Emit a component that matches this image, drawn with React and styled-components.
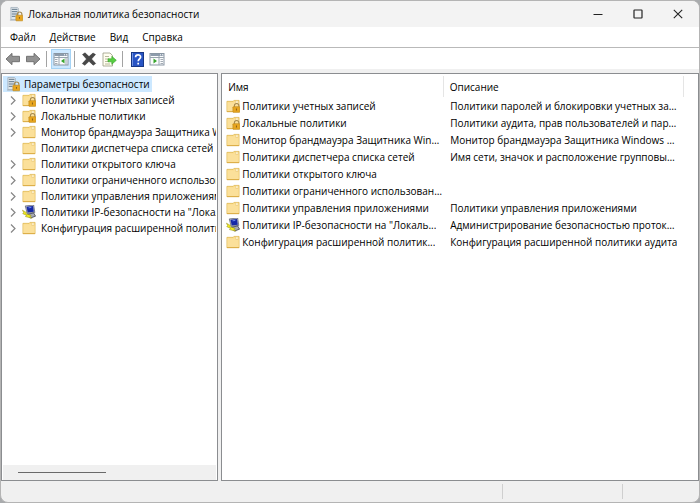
import React from 'react';
import styled, { createGlobalStyle } from 'styled-components';

const GlobalStyle = createGlobalStyle`
  * {
    box-sizing: border-box;
  }

  body {
    margin: 0;
    background: #a9abad;
    color: black;
    font-family: 'Open Sans', 'Noto Sans', sans-serif;
    font-size: 10px;
    line-height: 16px;
  }

  button {
    padding: 0;
    border: 0;
    background: none;
    color: inherit;
    font: inherit;
  }

  svg {
    display: block;
    flex: none;
  }
`;

const Window = styled.div`
  display: flex;
  flex-direction: column;
  height: 100vh;
  border: 1px solid #b4b4b4;
  border-radius: 8px;
  background: #f0f0f0;
  overflow: hidden;
`;

const TitleBar = styled.header`
  display: flex;
  align-items: center;
  height: 26px;
  padding: 0 1px 0 8px;
  background: #f3f3f3;
`;

const Title = styled.h1`
  flex: 1;
  margin: 0 0 0 5px;
  font-size: 10px;
  font-weight: 400;
`;

const WindowButton = styled.button`
  display: flex;
  justify-content: center;
  align-items: center;
  width: 40px;
  height: 26px;
`;

const MenuBar = styled.nav`
  display: flex;
  align-items: center;
  gap: 14px;
  height: 21px;
  padding-left: 9px;
  border-bottom: 1px solid #b9b9b9;
  background: white;
`;

const MenuItem = styled.button`
  font-weight: 500;
`;

const ToolBar = styled.div`
  display: flex;
  align-items: center;
  height: 21px;
  padding: 1px 0 0 2px;
  background: white;
`;

const ToolButton = styled.button`
  display: flex;
  justify-content: center;
  align-items: center;
  width: 20px;
  height: 20px;
  border: 1px solid ${(props) => (props.$active ? '#a5d3f5' : 'transparent')};
  background: ${(props) => (props.$active ? '#cce8ff' : 'transparent')};
`;

const Separator = styled.span`
  width: 1px;
  height: 16px;
  margin: 0 4px 0 3px;
  background: #a3a3a3;
`;

const Panes = styled.main`
  display: grid;
  grid-template-columns: minmax(0, 5fr) minmax(0, 11fr);
  gap: 3px;
  flex: 1;
  min-height: 0;
  margin-top: 4px;
`;

const TreePane = styled.section`
  display: flex;
  flex-direction: column;
  padding: 2px 1px 0;
  border: 1px solid #8b8d90;
  background: white;
`;

const Tree = styled.ul`
  flex: 1;
  margin: 0;
  padding: 0;
  list-style: none;
  overflow: hidden;
`;

const TreeRow = styled.li`
  display: flex;
  align-items: center;
  height: 16px;
  font-weight: 500;
  white-space: nowrap;
`;

const RootLabel = styled.span`
  display: flex;
  align-items: center;
  gap: 4px;
  height: 16px;
  padding: 0 2px 0 3px;
  background: #cce8ff;
`;

const Expander = styled.button`
  display: flex;
  flex: none;
  justify-content: center;
  align-items: center;
  width: 19px;
  height: 16px;
`;

const TreeLabel = styled.span`
  min-width: 0;
  margin-left: 5px;
  overflow: hidden;
`;

const ScrollTrack = styled.div`
  height: 15px;
  padding: 7px 15px 0;
  background: #f0f0f0;
`;

const ScrollThumb = styled.div`
  width: 48%;
  height: 1px;
  background: #6a6a6a;
`;

const ListPane = styled.section`
  padding-top: 2px;
  border: 1px solid #8b8d90;
  background: white;
  overflow: hidden;
`;

const List = styled.table`
  width: 100%;
  border-collapse: collapse;
  table-layout: fixed;
`;

const NameColumn = styled.col`
  width: 46.5%;
`;

const InfoColumn = styled.col`
  width: 50.5%;
`;

const HeadCell = styled.th`
  height: 21px;
  padding: 0 6px;
  border-right: 1px solid ${(props) => (props.$last ? 'transparent' : '#e5e5e5')};
  font-weight: 400;
  text-align: left;
`;

const Cell = styled.td`
  height: 17px;
  padding: ${(props) => (props.$name ? '0 0 0 4px' : '0 4px 0 7px')};
  font-weight: 500;
`;

const CellContent = styled.div`
  display: flex;
  align-items: center;
  gap: 2px;
`;

const CellText = styled.span`
  min-width: 0;
  overflow: hidden;
  text-overflow: ellipsis;
  white-space: nowrap;
`;

const StatusBar = styled.footer`
  display: flex;
  height: 21px;
  padding: 3px 0;
`;

const StatusPart = styled.div`
  flex: ${(props) => props.$grow};
  border-right: 1px solid ${(props) => (props.$last ? 'transparent' : '#cfcfcf')};
`;

const Padlock = () => (
  <g>
    <path d="M9 9V7.2a2.4 2.4 0 0 1 4.8 0V9" fill="none" stroke="#a58a52" strokeWidth="1.2" />
    <rect x="7.4" y="8.3" width="7.4" height="6" rx="0.5" fill="#e8a61f" stroke="#c18a1c" strokeWidth="0.7" />
    <path d="M11.2 10.2v2" stroke="#8c611a" strokeWidth="1.1" />
  </g>
);

const FolderIcon = ({ locked }) => (
  <svg width="14" height="14" viewBox="0 0 15 15" aria-hidden="true">
    <path d="M1 2.5h6.5l1-1H14v12H1z" fill="#f8d983" stroke="#dfb650" strokeWidth="0.8" />
    <path d="M1.5 3.5h7l1-1h4v10.5h-12z" fill="#fbe09a" />
    <path d="M10.5 1.8h2.4v3h-2.4z" fill="#fff6d8" stroke="#e0b95c" strokeWidth="0.5" />
    <path d="M1 13.5h13" stroke="#d9a93f" />
    {locked && <Padlock />}
  </svg>
);

const ServerIcon = () => (
  <svg width="14" height="16" viewBox="0 0 15 16" aria-hidden="true">
    <path d="M2 1h7l1 1v12H2z" fill="#dfe6eb" stroke="#93a3af" strokeWidth="0.7" />
    <path d="M3 3h6M3 5.5h6M3 8h6M3 10.5h4" stroke="#587083" />
    <path d="M1 14.5h10" stroke="#a8b2ba" />
    <g transform="translate(0 1)">
      <Padlock />
    </g>
  </svg>
);

const ComputerIcon = () => (
  <svg width="14" height="14" viewBox="0 0 15 15" aria-hidden="true">
    <path d="M3.5 1l9-1 1.2 8-8.2 1z" fill="#bfc3cc" stroke="#4c5063" strokeWidth="0.7" />
    <path d="M4.8 1.8l7-.8.9 6.2-6.6.8z" fill="#1628a6" />
    <path d="M7 3l3-.4" stroke="#6f8ff5" />
    <path d="M6 10l6.5-1.5 2 3.5-5.5 2z" fill="#a8abb3" stroke="#343746" strokeWidth="0.8" />
    <path
      d="M0.5 5.5L5 8.2 4.2 9.4l5.6 1.8-1 1.2 1.7 1.8-6.8-1.8 1-1.5-3.9-1.6 1-1z"
      fill="#f5ee22"
      stroke="#858000"
      strokeWidth="0.5"
    />
  </svg>
);

const ArrowIcon = ({ forward }) => (
  <svg width="16" height="14" viewBox="0 0 16 14" aria-hidden="true">
    <path
      d={forward ? 'M15 7L9 1.3v3H1.5v5.4H9v3z' : 'M1 7l6-5.7v3h7.5v5.4H7v3z'}
      fill="#929292"
      stroke="#6c6c6c"
      strokeWidth="0.9"
      strokeLinejoin="round"
    />
  </svg>
);

const PanelIcon = ({ flipped }) => (
  <svg width="16" height="14" viewBox="0 0 16 14" aria-hidden="true">
    <rect x="1" y="1.5" width="14" height="11.5" fill="#fbfcfd" stroke="#8996a3" />
    <path d="M1.5 3h13" stroke="#8d9cac" strokeWidth="2" />
    <path d="M11 2.8h1M13 2.8h1" stroke="#fff" />
    {flipped ? (
      <g>
        <path d="M10 4v9M1 5.5h14" stroke="#98a4af" />
        <path d="M11.5 7.5h2.5M11.5 9.5h2.5M11.5 11.5h2.5" stroke="#7c8893" strokeWidth="0.7" />
        <path d="M4.5 6.5L8 9l-3.5 2.5z" fill="#37a52c" />
      </g>
    ) : (
      <g>
        <path d="M6 4v9M1 5.5h14M13 6v7" stroke="#98a4af" />
        <path d="M2 7.5h2.5M2 9.5h2.5M2 11.5h2.5" stroke="#7c8893" strokeWidth="0.7" />
        <path d="M11.5 6.5L8 9l3.5 2.5z" fill="#37a52c" />
      </g>
    )}
  </svg>
);

const DeleteIcon = () => (
  <svg width="16" height="14" viewBox="0 0 16 14" aria-hidden="true">
    <path
      d="M1.5 2.5L4 .8l4 3.8L12 1l2.5 1.5L10.5 7l4.2 4.5-2.5 1.7L8 9.3l-4.2 4-2.5-1.7L5.5 7z"
      fill="#484848"
      stroke="#303030"
      strokeWidth="0.5"
    />
  </svg>
);

const ExportIcon = () => (
  <svg width="16" height="15" viewBox="0 0 16 15" aria-hidden="true">
    <path d="M2 1h7l2.5 2.5V14H2z" fill="#fffef0" stroke="#9b9c83" strokeWidth="0.8" />
    <path d="M4 4.5h4M4 7h4M4 9.5h4M4 12h5" stroke="#a7a688" strokeWidth="0.8" />
    <path d="M7 6.8h3.8V4.3L15.3 8.3l-4.5 4V9.8H7z" fill="#58ce41" stroke="#30a126" strokeWidth="0.6" />
  </svg>
);

const HelpIcon = () => (
  <svg width="13" height="15" viewBox="0 0 13 15" aria-hidden="true">
    <rect x="0.5" y="0.5" width="12" height="14" fill="#2854c4" stroke="#173785" />
    <path d="M1.5 1v13" stroke="#7193e2" />
    <path
      d="M4.6 5.2c0-3 5-3 5-.2 0 1.8-2.4 1.9-2.4 4.2M7.2 10.8v1.8"
      fill="none"
      stroke="white"
      strokeWidth="1.7"
    />
  </svg>
);

const ChevronIcon = () => (
  <svg width="6" height="9" viewBox="0 0 6 9" aria-hidden="true">
    <path d="M1 0.5l4 4-4 4" fill="none" stroke="#858585" strokeWidth="1.2" />
  </svg>
);

const policies = [
  { name: 'Политики учетных записей', info: 'Политики паролей и блокировки учетных записей', icon: 'locked' },
  { name: 'Локальные политики', info: 'Политики аудита, прав пользователей и параметров', icon: 'locked' },
  { name: 'Монитор брандмауэра Защитника Windows', info: 'Монитор брандмауэра Защитника Windows в режиме' },
  { name: 'Политики диспетчера списка сетей', info: 'Имя сети, значок и расположение групповых политик', leaf: true },
  { name: 'Политики открытого ключа', info: '' },
  { name: 'Политики ограниченного использования', info: '' },
  { name: 'Политики управления приложениями', info: 'Политики управления приложениями' },
  {
    name: 'Политики IP-безопасности на "Локальный компьютер"',
    shortName: 'Политики IP-безопасности на "Локаль...',
    info: 'Администрирование безопасностью протокола',
    icon: 'computer',
  },
  {
    name: 'Конфигурация расширенной политики аудита',
    shortName: 'Конфигурация расширенной политик...',
    info: 'Конфигурация расширенной политики аудита',
  },
];

const PolicyIcon = ({ icon }) =>
  icon === 'computer' ? <ComputerIcon /> : <FolderIcon locked={icon === 'locked'} />;

export default function App() {
  return (
    <>
      <GlobalStyle />
      <Window>
        <TitleBar>
          <ServerIcon />
          <Title>Локальная политика безопасности</Title>
          <WindowButton aria-label="Свернуть">
            <svg width="10" height="10" viewBox="0 0 10 10">
              <path d="M0.5 5.5h9" stroke="#222" />
            </svg>
          </WindowButton>
          <WindowButton aria-label="Развернуть">
            <svg width="10" height="10" viewBox="0 0 10 10">
              <rect x="1" y="1" width="8" height="8" rx="0.5" fill="none" stroke="#222" strokeWidth="1.2" />
            </svg>
          </WindowButton>
          <WindowButton aria-label="Закрыть">
            <svg width="10" height="10" viewBox="0 0 10 10">
              <path d="M0.8 0.8l8.4 8.4M9.2 0.8L0.8 9.2" stroke="#222" strokeWidth="1.1" />
            </svg>
          </WindowButton>
        </TitleBar>

        <MenuBar>
          <MenuItem>Файл</MenuItem>
          <MenuItem>Действие</MenuItem>
          <MenuItem>Вид</MenuItem>
          <MenuItem>Справка</MenuItem>
        </MenuBar>

        <ToolBar>
          <ToolButton aria-label="Назад">
            <ArrowIcon />
          </ToolButton>
          <ToolButton aria-label="Вперед">
            <ArrowIcon forward />
          </ToolButton>
          <Separator />
          <ToolButton $active aria-label="Дерево консоли">
            <PanelIcon />
          </ToolButton>
          <Separator />
          <ToolButton aria-label="Удалить">
            <DeleteIcon />
          </ToolButton>
          <ToolButton aria-label="Экспорт списка">
            <ExportIcon />
          </ToolButton>
          <Separator />
          <ToolButton aria-label="Справка">
            <HelpIcon />
          </ToolButton>
          <ToolButton aria-label="Панель действий">
            <PanelIcon flipped />
          </ToolButton>
        </ToolBar>

        <Panes>
          <TreePane>
            <Tree>
              <TreeRow>
                <RootLabel>
                  <ServerIcon />
                  Параметры безопасности
                </RootLabel>
              </TreeRow>
              {policies.map((policy) => (
                <TreeRow key={policy.name}>
                  <Expander aria-label={policy.name} disabled={policy.leaf}>
                    {!policy.leaf && <ChevronIcon />}
                  </Expander>
                  <PolicyIcon icon={policy.icon} />
                  <TreeLabel>{policy.name}</TreeLabel>
                </TreeRow>
              ))}
            </Tree>
            <ScrollTrack>
              <ScrollThumb />
            </ScrollTrack>
          </TreePane>

          <ListPane>
            <List>
              <colgroup>
                <NameColumn />
                <InfoColumn />
                <col />
              </colgroup>
              <thead>
                <tr>
                  <HeadCell>Имя</HeadCell>
                  <HeadCell>Описание</HeadCell>
                  <HeadCell $last />
                </tr>
              </thead>
              <tbody>
                {policies.map((policy) => (
                  <tr key={policy.name}>
                    <Cell $name>
                      <CellContent>
                        <PolicyIcon icon={policy.icon} />
                        <CellText>{policy.shortName || policy.name}</CellText>
                      </CellContent>
                    </Cell>
                    <Cell>
                      <CellContent>
                        <CellText>{policy.info}</CellText>
                      </CellContent>
                    </Cell>
                  </tr>
                ))}
              </tbody>
            </List>
          </ListPane>
        </Panes>

        <StatusBar>
          <StatusPart $grow={505} />
          <StatusPart $grow={119} />
          <StatusPart $grow={76} $last />
        </StatusBar>
      </Window>
    </>
  );
}
